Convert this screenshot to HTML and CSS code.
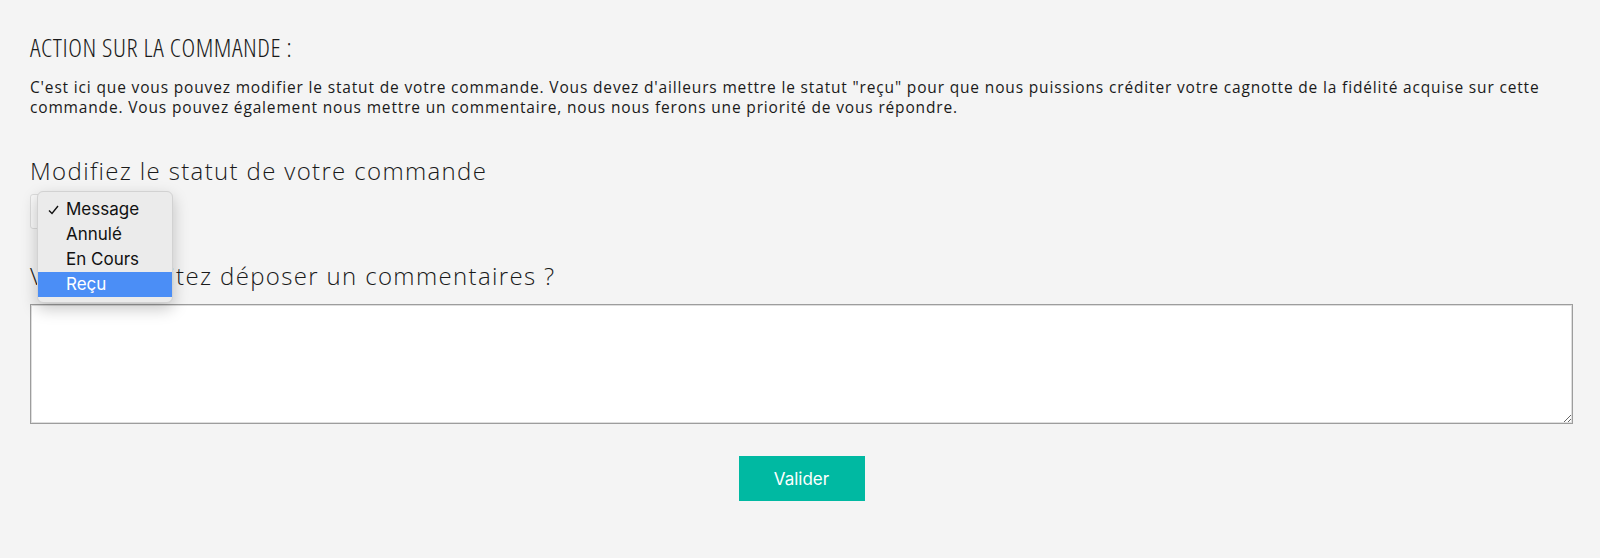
FILE: index.html
```html
<!DOCTYPE html>
<html lang="fr">
<head>
    <meta charset="UTF-8">
    <meta name="viewport" content="width=device-width, initial-scale=1.0">
    <title>Action sur la commande</title>
    <link rel="stylesheet" href="styles.css">
</head>
<body>
    <div class="container">
        <h1 class="title">ACTION SUR LA COMMANDE :</h1>
        <p class="intro">C'est ici que vous pouvez modifier le statut de votre commande. Vous devez d'ailleurs mettre le statut "reçu" pour que nous puissions créditer votre cagnotte de la fidélité acquise sur cette commande. Vous pouvez également nous mettre un commentaire, nous nous ferons une priorité de vous répondre.</p>

        <form class="order-form">
            <h3 class="field-title">Modifiez le statut de votre commande</h3>

            <!-- select ouvert -->
            <div class="select-wrap">
                <div class="select-box"></div>
                <ul class="select-menu">
                    <li class="option checked">
                        <svg class="check" width="11" height="10" viewBox="0 0 11 10"><polyline points="1,5.5 4,8.5 10,1" fill="none" stroke="#111" stroke-width="1.4"/></svg>
                        Message
                    </li>
                    <li class="option">Annulé</li>
                    <li class="option">En Cours</li>
                    <li class="option active">Reçu</li>
                </ul>
            </div>

            <h3 class="field-title second">Vous souhaitez déposer un commentaires ?</h3>
            <textarea class="comment" name="commentaire"></textarea>

            <div class="actions">
                <button type="submit">Valider</button>
            </div>
        </form>
    </div>
</body>
</html>
```

FILE: styles.css
```css
body {
    margin: 0;
    padding: 0;
    background-color: #f4f4f4;
    font-family: "Open Sans", Arial, sans-serif;
    color: #222;
}
.container {
    padding: 32px 27px 0 30px;
}
.title {
    margin: 0;
    font-family: "Open Sans", sans-serif;
    font-stretch: 75%;
    font-size: 26px;
    line-height: 30px;
    font-weight: 350;
    letter-spacing: 0.55px;
    color: #1a1a1a;
}
.intro {
    margin: 15px 0 0 0;
    font-size: 15.5px;
    line-height: 20px;
    letter-spacing: 0.84px;
    color: #1a1a1a;
}
.order-form {
    margin-top: 39px;
}
.field-title {
    margin: 0;
    font-size: 24px;
    line-height: 30px;
    font-weight: 350;
    letter-spacing: 1.35px;
    color: #1a1a1a;
}
.field-title.second {
    margin-top: 32px;
}
.select-wrap {
    position: relative;
    margin-top: 8px;
    width: 130px;
    height: 35px;
}
.select-box {
    height: 35px;
    box-sizing: border-box;
    border: 1px solid #dcdcdc;
    border-radius: 3px;
    background: #f8f8f8;
}
.select-menu {
    position: absolute;
    left: 7px;
    top: -3px;
    width: 136px;
    margin: 0;
    padding: 5px 0;
    list-style: none;
    box-sizing: border-box;
    background: #ebebeb;
    border: 1px solid #d2d2d2;
    border-radius: 6px;
    box-shadow: 0 6px 16px rgba(0, 0, 0, 0.22);
    font-family: Inter, "Liberation Sans", sans-serif;
    font-size: 17px;
    color: #111;
}
.option {
    position: relative;
    height: 25px;
    line-height: 25px;
    padding-left: 28px;
}
.option .check {
    position: absolute;
    left: 10px;
    top: 8px;
}
.option.active {
    background: #4b8ef6;
    color: #fff;
}
.comment {
    display: block;
    width: 100%;
    height: 120px;
    margin-top: 13px;
    box-sizing: border-box;
    border: 1px solid #9d9d9d;
    box-shadow: inset 0 0 0 1px #dedede;
    background: #fff;
    font-family: inherit;
}
.actions {
    display: flex;
    justify-content: center;
    margin-top: 32px;
}
.actions button {
    width: 126px;
    height: 45px;
    border: none;
    background-color: #00b9a2;
    color: #fff;
    font-family: Inter, "Liberation Sans", sans-serif;
    font-size: 17px;
    cursor: pointer;
}
```
